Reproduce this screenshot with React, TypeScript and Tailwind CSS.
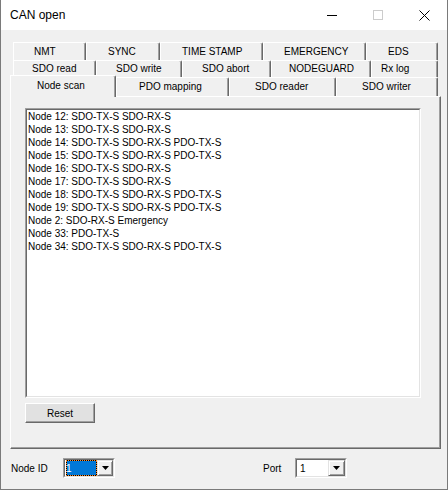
import React from "react";

type Tab = { label: string; cls: string };

const ROW_1: Tab[] = [
  { label: "NMT", cls: "w-[73px] pl-[20px]" },
  { label: "SYNC", cls: "w-[74px] pl-[21px]" },
  { label: "TIME STAMP", cls: "w-[103px] pl-[21px]" },
  { label: "EMERGENCY", cls: "w-[103px] pl-[20px]" },
  { label: "EDS", cls: "w-[72px] pl-[21px]" },
];

const ROW_2: Tab[] = [
  { label: "SDO read", cls: "w-[83px] pl-[18px]" },
  { label: "SDO write", cls: "w-[86px] pl-[19px]" },
  { label: "SDO abort", cls: "w-[89px] pl-[19px]" },
  { label: "NODEGUARD", cls: "w-[100px] pl-[17px]" },
  { label: "Rx log", cls: "w-[67px] pl-[9px]" },
];

const ROW_3: Tab[] = [
  { label: "PDO mapping", cls: "w-[113px] pl-[22px]" },
  { label: "SDO reader", cls: "w-[107px] pl-[25px]" },
  { label: "SDO writer", cls: "w-[102px] pl-[25px]" },
];

const NODES = [
  "Node 12: SDO-TX-S SDO-RX-S",
  "Node 13: SDO-TX-S SDO-RX-S",
  "Node 14: SDO-TX-S SDO-RX-S PDO-TX-S",
  "Node 15: SDO-TX-S SDO-RX-S PDO-TX-S",
  "Node 16: SDO-TX-S SDO-RX-S",
  "Node 17: SDO-TX-S SDO-RX-S",
  "Node 18: SDO-TX-S SDO-RX-S PDO-TX-S",
  "Node 19: SDO-TX-S SDO-RX-S PDO-TX-S",
  "Node 2: SDO-RX-S Emergency",
  "Node 33: PDO-TX-S",
  "Node 34: SDO-TX-S SDO-RX-S PDO-TX-S",
];

function TabButton({ tab, height }: { tab: Tab; height: string }) {
  return (
    <div
      className={`${tab.cls} ${height} flex shrink-0 items-center rounded-tr-[2px] border-t border-l border-r border-t-white border-l-white border-r-[#696969] bg-[#f0f0f0] pb-px shadow-[inset_-1px_0_0_#a0a0a0]`}
    >
      {tab.label}
    </div>
  );
}

function ComboBox({ selected }: { selected?: boolean }) {
  return (
    <div className="h-[20px] w-[52px] border border-t-[#a0a0a0] border-l-[#a0a0a0] border-r-white border-b-white">
      <div className="flex h-full w-full border border-t-[#696969] border-l-[#696969] border-r-[#e3e3e3] border-b-[#e3e3e3] bg-white">
        <div className="flex flex-1 items-center pl-px">
          {selected ? (
            <div className="h-[16px] w-[31px] bg-black">
              <div className="flex h-full w-full items-center border border-dotted border-[#ff8c28] bg-[#0078d7] bg-clip-padding text-white">
                <span className="-ml-px">1</span>
              </div>
            </div>
          ) : (
            <span className="pl-[2px]">1</span>
          )}
        </div>
        <div className="flex w-[17px] items-center justify-center border border-t-[#e3e3e3] border-l-[#e3e3e3] border-r-[#696969] border-b-[#696969] bg-[#f0f0f0] shadow-[inset_1px_1px_0_white,inset_-1px_-1px_0_#a0a0a0]">
          <svg width="7" height="4" viewBox="0 0 7 4">
            <path d="M0 0h7L3.5 4z" fill="#000" />
          </svg>
        </div>
      </div>
    </div>
  );
}

export default function App() {
  return (
    <div className="flex h-[490px] w-[448px] flex-col border-r border-b border-l border-[#7a7a7a] bg-[#f0f0f0] font-['Liberation_Sans',Arial,sans-serif] text-[10px] text-black">
      {/* title bar */}
      <div className="flex h-[30px] shrink-0 items-center bg-white">
        <span className="flex-1 pl-[9px] text-[12px]">CAN open</span>
        <div className="flex h-full w-[46px] items-center justify-center">
          <svg width="10" height="10" viewBox="0 0 10 10">
            <path d="M0 5.5h10" stroke="#000" strokeWidth="1" />
          </svg>
        </div>
        <div className="flex h-full w-[46px] items-center justify-center">
          <svg width="10" height="10" viewBox="0 0 10 10">
            <rect x="0.5" y="0.5" width="9" height="9" fill="none" stroke="#cccccc" strokeWidth="1" />
          </svg>
        </div>
        <div className="flex h-full w-[46px] items-center justify-center">
          <svg width="11" height="11" viewBox="0 0 11 11">
            <path d="M0.5 0.5l10 10M10.5 0.5l-10 10" stroke="#000" strokeWidth="1" />
          </svg>
        </div>
      </div>

      {/* tabs */}
      <div className="mt-[12px] flex flex-col">
        <div className="ml-[12px] flex h-[18px]">
          {ROW_1.map((t) => (
            <TabButton key={t.label} tab={t} height="h-[18px]" />
          ))}
        </div>
        <div className="ml-[12px] flex h-[17px]">
          {ROW_2.map((t) => (
            <TabButton key={t.label} tab={t} height="h-[17px]" />
          ))}
        </div>
        <div className="relative z-10 -mt-[2px] ml-[9px] flex h-[21px] items-end">
          <div className="-mb-px flex h-[22px] w-[106px] shrink-0 items-center rounded-tr-[2px] border-t border-l border-r border-t-white border-l-white border-r-[#696969] bg-[#f0f0f0] pb-[2px] pl-[26px] shadow-[inset_-1px_0_0_#a0a0a0]">
            Node scan
          </div>
          {ROW_3.map((t) => (
            <TabButton key={t.label} tab={t} height="h-[19px]" />
          ))}
        </div>
      </div>

      {/* panel */}
      <div className="ml-[9px] h-[353px] w-[431px] border border-t-white border-l-white border-r-[#696969] border-b-[#696969]">
        <div className="h-full w-full border-r border-b border-r-[#a0a0a0] border-b-[#a0a0a0] pt-[11px] pl-[14px]">
          <div className="h-[290px] w-[396px] border border-t-[#a0a0a0] border-l-[#a0a0a0] border-r-white border-b-white">
            <div className="h-full w-full border border-t-[#696969] border-l-[#696969] border-r-[#e3e3e3] border-b-[#e3e3e3] bg-white pl-px">
              {NODES.map((n) => (
                <div key={n} className="h-[13px] leading-[13px] whitespace-nowrap">
                  {n}
                </div>
              ))}
            </div>
          </div>
          <button className="mt-[5px] flex h-[20px] w-[70px] items-center justify-center border border-t-white border-l-white border-r-[#696969] border-b-[#696969] bg-[#e1e1e1] shadow-[inset_-1px_-1px_0_#a0a0a0]">
            Reset
          </button>
        </div>
      </div>

      {/* bottom row */}
      <div className="mt-[9px] flex h-[20px] items-center pl-[10px]">
        <span className="w-[52px]">Node ID</span>
        <ComboBox selected />
        <span className="ml-[148px] w-[32px]">Port</span>
        <ComboBox />
      </div>
    </div>
  );
}
